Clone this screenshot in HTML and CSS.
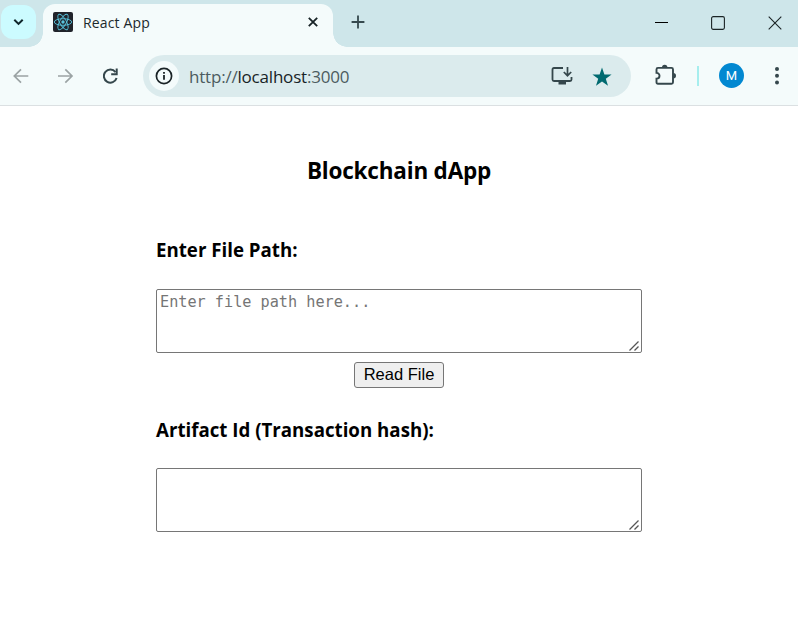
FILE: index.html
```html
<!DOCTYPE html>
<html lang="en">
<head>
<meta charset="utf-8">
<title>React App</title>
<link rel="stylesheet" href="styles.css">
</head>
<body>
<header class="browser">
  <div class="tabstrip">
    <div class="search-tabs">
      <svg width="12" height="12" viewBox="0 0 12 12"><path d="M1.300 3.700 5.500 7.900l4.200-4.200" fill="none" stroke="#10262b" stroke-width="2"/></svg>
    </div>
    <div class="tab">
      <svg class="favicon" width="20" height="20" viewBox="0 0 20 20">
        <rect width="20" height="20" rx="2" fill="#20232a"/>
        <g fill="none" stroke="#58c4dc" stroke-width=".9">
          <ellipse cx="10" cy="10" rx="8.7" ry="3.3"/>
          <ellipse cx="10" cy="10" rx="8.7" ry="3.3" transform="rotate(60 10 10)"/>
          <ellipse cx="10" cy="10" rx="8.7" ry="3.3" transform="rotate(120 10 10)"/>
        </g>
        <circle cx="10" cy="10" r="1.7" fill="#58c4dc"/>
      </svg>
      <span class="tab-title">React App</span>
      <svg class="tab-close" width="12" height="12" viewBox="0 0 12 12"><path d="m1.800 1.800 8.400 8.400m0-8.400-8.400 8.400" stroke="#172326" stroke-width="1.800"/></svg>
    </div>
    <svg class="new-tab" width="14" height="14" viewBox="0 0 14 14"><path d="M7 .6v12.800M.6 7h12.800" stroke="#35494e" stroke-width="1.800"/></svg>
    <div class="window-controls">
      <svg width="14" height="14" viewBox="0 0 14 14"><path d="M1 6.500h13" stroke="#000"/></svg>
      <svg width="14" height="14" viewBox="0 0 14 14"><rect x=".6" y=".6" width="12.800" height="12.800" rx="1.600" fill="none" stroke="#1b2426" stroke-width="1.100"/></svg>
      <svg width="14" height="14" viewBox="0 0 14 14"><path d="m.7.7 12.600 12.600m0-12.600L.7 13.300" stroke="#1b2426" stroke-width="1.100"/></svg>
    </div>
  </div>
  <div class="toolbar">
    <div class="nav">
      <svg width="16" height="16" viewBox="0 0 16 16"><path d="M15.300 8H1.800M8 1.300 1.300 8 8 14.700" fill="none" stroke="#9ba3a4" stroke-width="1.700"/></svg>
      <svg width="16" height="16" viewBox="0 0 16 16"><path d="M0 8h13.500M7.300 1.300 14 8 7.300 14.700" fill="none" stroke="#9ba3a4" stroke-width="1.700"/></svg>
      <svg width="16" height="16" viewBox="0 0 16 16"><path d="M12.500 4.100A6.500 6.500 0 1 0 13.600 10" fill="none" stroke="#35474c" stroke-width="2"/><path d="M13.700.5v5.800H8.200" fill="none" stroke="#35474c" stroke-width="2"/></svg>
    </div>
    <div class="omnibox">
      <div class="site-info">
        <svg width="18" height="18" viewBox="0 0 18 18"><circle cx="9" cy="9" r="7.600" fill="none" stroke="#1a2326" stroke-width="1.700"/><path d="M9 8v4.800M9 5v1.800" stroke="#1a2326" stroke-width="1.800"/></svg>
      </div>
      <span class="url">http://<b>localhost</b>:3000</span>
      <svg class="install" width="22" height="20" viewBox="0 0 22 20"><path d="M12 2H3Q1.500 2 1.500 3.500V13.500Q1.500 15 3 15H19Q20.500 15 20.500 13.500V11" fill="none" stroke="#35474c" stroke-width="1.800"/><path d="M7.500 15.500h7.500v3H7.500z" fill="#35474c"/><path d="M16.500 1v8.500M12.800 6l3.700 3.700L20.200 6" fill="none" stroke="#35474c" stroke-width="1.700"/></svg>
      <svg class="star" width="20" height="20" viewBox="0 0 20 20"><path d="m10 .4 2.400 7h7.200l-5.800 4.300 2.200 7.100-6-4.300-6 4.300 2.200-7.100L.4 7.400h7.200z" fill="#006a70"/></svg>
    </div>
    <svg class="extensions" width="22" height="22" viewBox="0 0 22 22"><path d="M3 3.900H16.500Q18 3.900 18 5.400V18.200Q18 19.700 16.500 19.700H3Q1.500 19.700 1.500 18.200V14.700C5.500 14.700 5.500 8.900 1.500 8.900V5.400Q1.500 3.900 3 3.900Z" fill="none" stroke="#35474c" stroke-width="1.900"/><path d="M7 3.500a2.700 2.700 0 0 1 5.400 0zM18.300 9a2.700 2.700 0 0 1 0 5.400z" fill="#35474c"/></svg>
    <span class="divider"></span>
    <span class="avatar">M</span>
    <svg class="menu" width="6" height="20" viewBox="0 0 6 20"><g fill="#35474c"><circle cx="3" cy="3" r="2"/><circle cx="3" cy="9.800" r="2"/><circle cx="3" cy="16.600" r="2"/></g></svg>
  </div>
</header>
<main class="app">
  <h1>Blockchain dApp</h1>
  <h2 class="path-label">Enter File Path:</h2>
  <div class="field">
    <textarea placeholder="Enter file path here..." spellcheck="false"></textarea>
    <svg class="grip" width="12" height="12" viewBox="0 0 12 12"><path d="M1.500 10.500 10.500 1.500M6.500 10.500l4-4" stroke="#555" stroke-width="1.300"/></svg>
  </div>
  <button type="button">Read File</button>
  <h2 class="hash-label">Artifact Id (Transaction hash):</h2>
  <div class="field">
    <textarea aria-label="Transaction hash"></textarea>
    <svg class="grip" width="12" height="12" viewBox="0 0 12 12"><path d="M1.500 10.500 10.500 1.500M6.500 10.500l4-4" stroke="#555" stroke-width="1.300"/></svg>
  </div>
</main>
</body>
</html>
```
FILE: styles.css
```css
* { box-sizing: border-box; }
body { margin: 0; background: #fff; color: #000; font-family: "Open Sans", "Noto Sans", sans-serif; overflow: hidden; }
svg { display: block; flex: none; }

.browser { height: 106px; border-bottom: 1px solid #dbe0e2; background: #f4fbfb; }
.tabstrip { display: flex; align-items: flex-start; height: 47px; background: #cee6ea; }
.search-tabs { display: flex; align-items: center; justify-content: center; width: 35px; height: 34px; margin: 5px 7px 0 1px; border-radius: 12px; background: #ccfbff; }
.tab { position: relative; display: flex; align-items: center; width: 290px; height: 43px; margin-top: 4px; padding: 0 14px 7px 10px; border-radius: 12px 12px 0 0; background: #f4fbfb; }
.tab::before, .tab::after { content: ""; position: absolute; bottom: 0; width: 14px; height: 14px; }
.tab::before { right: 100%; background: radial-gradient(circle at 0 0, transparent 13.5px, #f4fbfb 14px); }
.tab::after { left: 100%; background: radial-gradient(circle at 100% 0, transparent 13.5px, #f4fbfb 14px); }
.tab-title { margin: 1px 0 0 10px; font-size: 14px; line-height: 20px; letter-spacing: 0.15px; color: #1b292c; }
.tab-close { margin-left: auto; }
.new-tab { margin: 15px 0 0 18px; }
.window-controls { display: flex; gap: 43px; margin: 16px 16px 0 auto; }

.toolbar { display: flex; align-items: center; height: 58px; }
.nav { display: flex; gap: 29px; margin-left: 13px; }
.omnibox { display: flex; align-items: center; width: 488px; height: 42px; margin-left: 24px; padding: 0 19px 0 6px; border-radius: 21px; background: #dbebed; }
.site-info { display: flex; align-items: center; justify-content: center; width: 30px; height: 30px; border-radius: 50%; background: #f4fbfb; }
.url { margin: 1px 0 0 10px; font-size: 17px; letter-spacing: -0.2px; color: #4c5c60; }
.url b { font-weight: 400; color: #172326; }
.install { margin-left: auto; }
.star { margin: 2px 0 0 19px; }
.extensions { margin: -3px 0 0 24px; }
.divider { width: 2px; height: 20px; margin-left: 20px; background: #a6eeee; }
.avatar { display: flex; align-items: center; justify-content: center; width: 25px; height: 25px; margin: -1px 0 0 20px; border-radius: 50%; background: #0288d1; color: #fff; font: 13px Roboto, sans-serif; }
.menu { margin-left: 30px; }

.app { display: flex; flex-direction: column; align-items: center; width: 486px; margin: 0 auto; padding-top: 49px; }
h1, h2 { margin: 0; font-weight: 700; white-space: nowrap; }
h1 { font-size: 22.5px; line-height: 32px; letter-spacing: -0.2px; }
h2 { align-self: flex-start; font-size: 18.7px; line-height: 26px; }
.path-label { margin: 50px 0 26px; }
.hash-label { margin: 29px 0 25px; }
.field { position: relative; }
textarea { display: block; width: 486px; height: 64px; margin: 0; padding: 2px 3px; border: 1px solid #767676; border-radius: 2px; background: #fff; font: 15.2px/20px "DejaVu Sans Mono", monospace; resize: none; }
textarea::placeholder { color: #757575; }
.grip { position: absolute; right: 2px; bottom: 1px; pointer-events: none; }
button { width: 90px; height: 26px; margin-top: 9px; padding: 0 0 2px; border: 1px solid #767676; border-radius: 3px; background: #efefef; color: #000; font: 16.5px/22px "Liberation Sans", sans-serif; }
```
